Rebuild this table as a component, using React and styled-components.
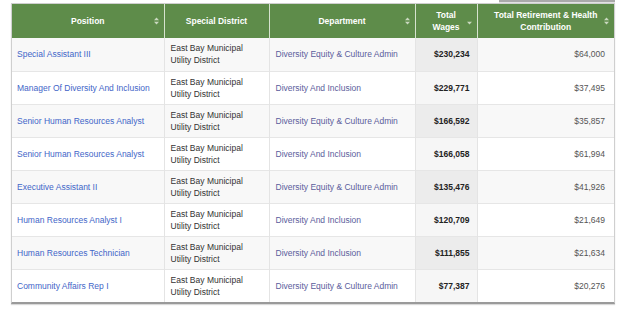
import styled, { createGlobalStyle } from "styled-components";

const rows = [
  ["Special Assistant III", "Diversity Equity & Culture Admin", "$230,234", "$64,000"],
  ["Manager Of Diversity And Inclusion", "Diversity And Inclusion", "$229,771", "$37,495"],
  ["Senior Human Resources Analyst", "Diversity Equity & Culture Admin", "$166,592", "$35,857"],
  ["Senior Human Resources Analyst", "Diversity And Inclusion", "$166,058", "$61,994"],
  ["Executive Assistant II", "Diversity Equity & Culture Admin", "$135,476", "$41,926"],
  ["Human Resources Analyst I", "Diversity And Inclusion", "$120,709", "$21,649"],
  ["Human Resources Technician", "Diversity And Inclusion", "$111,855", "$21,634"],
  ["Community Affairs Rep I", "Diversity Equity & Culture Admin", "$77,387", "$20,276"],
];

function SortIcon({ dir }) {
  return (
    <svg width="5" height="8" viewBox="0 0 5 8">
      {dir !== "desc" && <polygon points="0,3.2 2.5,0.4 5,3.2" fill="#c9d8bf" />}
      <polygon points="0,4.8 2.5,7.6 5,4.8" fill="#c9d8bf" />
    </svg>
  );
}

function App() {
  return (
    <>
      <GlobalStyle />
      <Page>
        <SearchEdge />
        <TableBox>
          <Table>
            <colgroup>
              <col style={{ width: 152 }} />
              <col style={{ width: 105 }} />
              <col style={{ width: 146 }} />
              <col style={{ width: 62 }} />
              <col style={{ width: 137 }} />
            </colgroup>
            <thead>
              <tr>
                <Th>
                  Position
                  <Sort><SortIcon /></Sort>
                </Th>
                <Th>Special District</Th>
                <Th>
                  Department
                  <Sort><SortIcon /></Sort>
                </Th>
                <Th $narrow>
                  Total
                  <br />
                  Wages
                  <Sort><SortIcon dir="desc" /></Sort>
                </Th>
                <Th $narrow>
                  Total Retirement &amp; Health
                  <br />
                  Contribution
                  <Sort><SortIcon /></Sort>
                </Th>
              </tr>
            </thead>
            <tbody>
              {rows.map((r, i) => (
                <Row key={i} $odd={i % 2 === 0}>
                  <PositionCell>{r[0]}</PositionCell>
                  <DistrictCell>
                    East Bay Municipal
                    <br />
                    Utility District
                  </DistrictCell>
                  <DeptCell>{r[1]}</DeptCell>
                  <WagesCell $odd={i % 2 === 0}>{r[2]}</WagesCell>
                  <BenefitCell>{r[3]}</BenefitCell>
                </Row>
              ))}
            </tbody>
          </Table>
        </TableBox>
      </Page>
    </>
  );
}

export default App;

const GlobalStyle = createGlobalStyle`
  body {
    margin: 0;
    background: #ffffff;
    font-family: "Liberation Sans", Arial, sans-serif;
  }
`;

const Page = styled.div`
  width: 624px;
  height: 310px;
  overflow: hidden;
`;

const SearchEdge = styled.div`
  width: 116px;
  height: 3px;
  margin-left: 499px;
  background: linear-gradient(#a9a9a9, #a9a9a9 2px, #e2e2e2 2px);
`;

const TableBox = styled.div`
  width: 602px;
  margin-left: 11px;
  border: 1px solid #cfcfcf;
  border-bottom: 2px solid #9a9a9a;
  box-shadow: 0 1px 1px rgba(0, 0, 0, 0.15);
`;

const Table = styled.table`
  width: 602px;
  table-layout: fixed;
  border-collapse: collapse;
  font-size: 8.5px;
`;

const Th = styled.th`
  position: relative;
  height: 34px;
  padding: 0 ${(p) => (p.$narrow ? "10px" : "12px")};
  background: #5e8c4a;
  color: #ffffff;
  font-weight: bold;
  line-height: 12px;
  text-align: center;
  border-left: 1px solid #d6e3cf;

  &:first-child {
    border-left: none;
  }
`;

const Sort = styled.span`
  position: absolute;
  right: 5px;
  top: 50%;
  transform: translateY(-50%);
  display: flex;
`;

const Row = styled.tr`
  height: 33px;
  background: ${(p) => (p.$odd ? "#f8f8f8" : "#ffffff")};
  border-top: 1px solid #e6e6e6;

  &:first-child {
    border-top: none;
  }
`;

const Cell = styled.td`
  padding: 0 6px;
  line-height: 12px;
  border-left: 1px solid #e4e4e4;

  &:first-child {
    border-left: none;
  }
`;

const PositionCell = styled(Cell)`
  padding-left: 5px;
  color: #3f66c8;
`;

const DistrictCell = styled(Cell)`
  color: #333333;
`;

const DeptCell = styled(Cell)`
  color: #5b5d9c;
`;

const WagesCell = styled(Cell)`
  padding-right: 7px;
  text-align: right;
  font-weight: bold;
  color: #222222;
  background: ${(p) => (p.$odd ? "#ececec" : "#f6f6f6")};
`;

const BenefitCell = styled(Cell)`
  padding-right: 9px;
  text-align: right;
  color: #555555;
`;
